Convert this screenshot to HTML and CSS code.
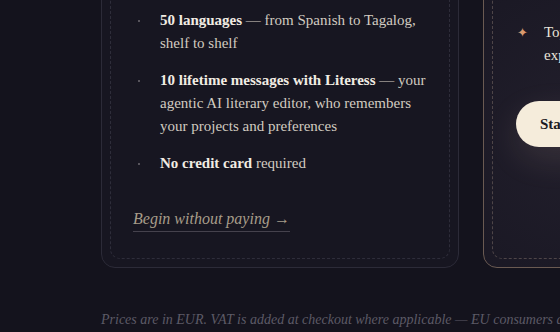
FILE: index.html
```html
<!DOCTYPE html>
<html lang="en">
<head>
    <meta charset="UTF-8">
    <meta name="viewport" content="width=device-width, initial-scale=1.0">
    <title>Pricing</title>
    <link rel="stylesheet" href="styles.css">
</head>
<body>
    <div class="plans">
        <div class="card">
            <div class="inner">
                <ul class="perks">
                    <li><b>50 languages</b> — from Spanish to Tagalog, shelf to shelf</li>
                    <li><b>10 lifetime messages with Literess</b> — your agentic AI literary editor, who remembers your projects and preferences</li>
                    <li><b>No credit card</b> required</li>
                </ul>
                <a class="free-link" href="#">Begin without paying →</a>
            </div>
        </div>
        <div class="card featured">
            <div class="inner">
                <ul class="perks stars">
                    <li>Top-tier editorial feedback from Literess, explained in depth</li>
                </ul>
                <a class="start" href="#">Start writing</a>
            </div>
        </div>
    </div>
    <p class="note">Prices are in EUR. VAT is added at checkout where applicable — EU consumers are charged local rates.</p>
</body>
</html>
```

FILE: styles.css
```css
body {
    margin: 0;
    background: #14131d;
    font-family: "Liberation Serif", "DejaVu Serif", serif;
    color: #e9e4da;
    overflow: hidden;
    height: 332px;
}
.plans {
    display: flex;
    gap: 24px;
    margin-top: -30px;
    padding-left: 101px;
}
.card {
    flex: 0 0 358px;
    border: 1px solid #2c2b38;
    border-radius: 14px;
    padding: 8px;
    background: #171621;
    box-sizing: border-box;
}
.inner {
    border: 1px dashed #2e2d3a;
    border-radius: 10px;
    padding: 29px 22px 26px;
}
.perks {
    list-style: none;
    margin: 0 0 35px;
    padding: 0;
}
.perks li {
    position: relative;
    padding-left: 27px;
    font-size: 15px;
    line-height: 23px;
    margin-bottom: 14px;
    color: #d2cbc0;
}
.perks li b {
    color: #f1ece3;
}
.perks li::before {
    content: "";
    position: absolute;
    left: 5px;
    top: 11px;
    width: 2px;
    height: 2px;
    border-radius: 50%;
    background: #6e6a70;
}
.free-link {
    display: inline-block;
    font-style: italic;
    font-size: 16px;
    color: #a79d8a;
    text-decoration: none;
    border-bottom: 1px solid #45424d;
    padding-bottom: 3px;
}
.featured {
    border-color: #6a5a52;
    background: radial-gradient(circle at 30% 55%, #221f2c 0%, #1a1824 60%, #181621 100%);
}
.featured .inner {
    border-color: #4e4548;
    padding: 41px 22px 0 23px;
    box-sizing: border-box;
    height: 100%;
}
.stars li {
    padding-left: 28px;
    color: #e9e4da;
}
.stars li::before {
    content: "✦";
    background: none;
    width: auto;
    height: auto;
    left: 1px;
    top: 0;
    font-size: 13px;
    color: #d99a6e;
}
.stars {
    margin-bottom: 34px;
}
.start {
    display: inline-block;
    background: #f5ecdb;
    color: #1b1a22;
    font-weight: bold;
    font-size: 15px;
    line-height: 16px;
    text-decoration: none;
    padding: 15px 24px;
    border-radius: 23px;
    box-shadow: 0 12px 34px rgba(230, 200, 170, 0.12);
}
.note {
    margin: 44px 0 0 101px;
    font-style: italic;
    font-size: 14px;
    color: #5c5a66;
    white-space: nowrap;
}
```
